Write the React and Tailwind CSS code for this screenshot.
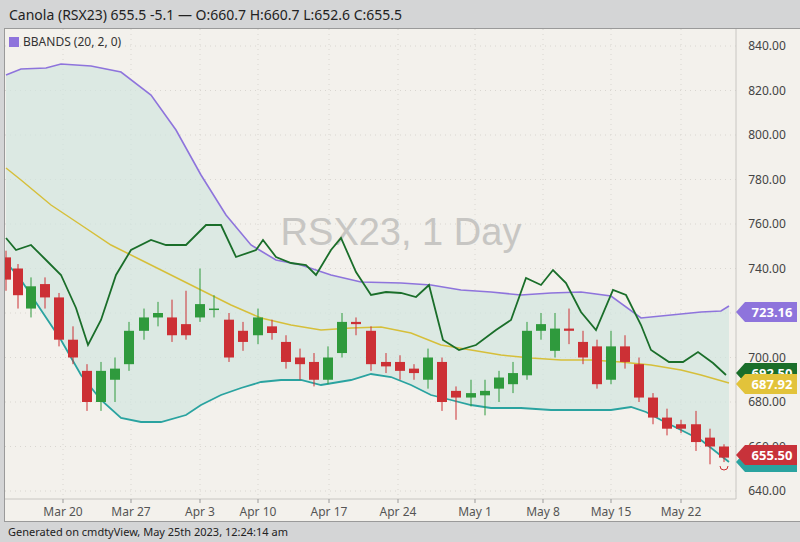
import React from 'react';

// page-coordinate data read off the reference
const upper = [[5,75],[20,69],[45,68],[60,64],[90,66],[120,72],[150,95],[175,130],[200,175],[225,215],[250,245],[275,260],[300,265],[330,275],[360,282],[400,283],[430,285],[460,290],[490,292],[520,295],[550,293],[580,292],[610,296],[640,318],[670,315],[700,312],[720,311],[728,306]];
const lower = [[5,262],[20,280],[40,310],[60,340],[80,375],[100,400],[120,418],[140,422],[160,422],[185,415],[200,405],[220,395],[240,388],[260,382],[280,380],[300,380],[320,385],[350,380],[370,374],[390,377],[410,385],[430,395],[450,400],[470,405],[490,408],[520,408],[550,410],[580,410],[610,410],[630,407],[645,412],[660,420],[680,430],[700,440],[728,462]];
const mid = [[5,168],[20,180],[50,205],[80,225],[110,245],[140,260],[170,275],[200,290],[230,305],[260,318],[290,325],[320,330],[350,328],[380,327],[410,333],[440,345],[470,350],[500,355],[530,358],[560,360],[590,360],[620,362],[650,365],[680,370],[700,375],[728,383]];
const close = [[5,238],[15,250],[30,245],[45,260],[60,275],[75,308],[87,345],[100,320],[115,275],[130,250],[150,240],[165,245],[185,245],[205,225],[220,225],[235,257],[255,250],[262,240],[275,257],[290,263],[305,265],[315,275],[330,250],[340,238],[355,272],[370,295],[385,292],[400,293],[415,297],[428,285],[442,340],[458,350],[475,345],[495,330],[510,320],[525,278],[540,285],[552,270],[565,283],[580,312],[595,330],[612,290],[625,295],[640,325],[650,350],[668,362],[682,362],[697,352],[712,363],[725,375]];

// x, open, close, high, low (price)
const candles = [
  [5,745,735,748,730],[17,740,728,742,722],[30,722,732,736,718],[44,733,727,736,722],[58,727,708,729,705],
  [72,708,700,714,697],[86,694,680,697,676],[100,680,694,698,676],[114,690,695,700,680],[128,697,712,716,694],
  [143,712,718,722,708],[157,718,720,725,714],[171,718,710,726,707],[185,715,710,730,708],[199,718,724,740,716],
  [213,722,722,728,718],[228,717,700,720,698],[242,712,707,716,703],[257,710,718,722,706],[271,714,711,717,708],
  [285,707,698,710,695],[299,700,697,704,690],[313,698,690,702,687],[327,690,700,705,688],[341,702,716,720,700],
  [355,716,715,718,710],[370,712,697,714,694],[385,698,696,702,693],[399,698,694,701,690],[413,695,693,697,690],
  [427,690,700,704,686],[441,698,680,700,676],[455,685,682,687,672],[470,682,684,690,678],[484,683,685,690,674],
  [498,686,691,694,680],[512,688,693,698,684],[526,692,712,716,690],[540,712,715,720,708],[554,703,713,720,700],
  [568,713,712,722,706],[582,707,700,712,697],[596,705,688,708,686],[610,690,705,712,688],[624,705,698,710,695],
  [638,697,682,700,680],[652,682,673,684,670],[666,673,668,677,665],[680,670,668,672,666],[695,670,662,676,658],
  [709,664,660,668,652],[723,660,655,661,653],
];
const py = v => 46 + (840 - v) * 2.225;
const pts = a => a.map(p => p.join(',')).join(' ');
const dates = [[62,'Mar 20'],[130,'Mar 27'],[199,'Apr 3'],[257,'Apr 10'],[328,'Apr 17'],[397,'Apr 24'],[474,'May 1'],[542,'May 8'],[610,'May 15'],[680,'May 22']];
const prices = [840,820,800,780,760,740,720,700,680,660,640];

function Tag({ y, color, text }) {
  return (
    <g>
      <polygon points={`735,${y} 744,${y - 10} 796,${y - 10} 796,${y + 10} 744,${y + 10}`} fill={color} />
      <text x="771" y={y + 5} textAnchor="middle" fontSize="13" fontWeight="bold" fill="#fff">{text}</text>
    </g>
  );
}

export default function App() {
  return (
    <div className="w-[800px] h-[542px] bg-[#d4d5d6] flex flex-col font-['Open_Sans','Liberation_Sans',sans-serif]">
      <div className="h-[28px] flex items-center px-[9px] text-[14px] text-[#222] font-['Liberation_Sans',Arial,sans-serif]">
        Canola (RSX23) 655.5 -5.1 — O:660.7 H:660.7 L:652.6 C:655.5
      </div>
      <div className="ml-[4px] w-[796px] h-[494px] bg-[#f3f1ec] border border-[#9a9a9a] border-r-0 relative">
        <svg width="796" height="492" viewBox="4 29 796 492" className="block">
          {prices.map(p => (
            <line key={p} x1="4" x2="735" y1={py(p)} y2={py(p)} stroke="#d9d6d0" strokeDasharray="1 4" />
          ))}
          {dates.map(([x]) => (
            <line key={x} x1={x} x2={x} y1="29" y2="499" stroke="#d9d6d0" strokeDasharray="1 4" />
          ))}
          <text x="400" y="245" textAnchor="middle" fontSize="38" fill="#c7c6c3" fontFamily='"Liberation Sans", Arial, sans-serif'>RSX23, 1 Day</text>
          <polygon points={pts([...upper, ...[...lower].reverse()])} fill="#cfe5df" fillOpacity="0.65" />
          <polyline points={pts(upper)} fill="none" stroke="#8e74dc" strokeWidth="1.6" />
          <polyline points={pts(lower)} fill="none" stroke="#2aa3a0" strokeWidth="1.8" />
          <polyline points={pts(mid)} fill="none" stroke="#d6bf3a" strokeWidth="1.5" />
          <polyline points={pts(close)} fill="none" stroke="#1a6e2a" strokeWidth="1.8" />
          {candles.map(([x, o, c, h, l]) => {
            const col = c >= o ? '#2f9a3d' : '#cc3035';
            const top = py(Math.max(o, c));
            const hgt = Math.max(1.5, Math.abs(o - c) * 2.225);
            return (
              <g key={x}>
                <line x1={x} x2={x} y1={py(h)} y2={py(l)} stroke={col} strokeWidth="1" />
                <rect x={x - 5} y={top} width="10" height={hgt} fill={col} />
              </g>
            );
          })}
          <path d="M719 466 a4 4 0 0 0 8 0" fill="none" stroke="#cc3035" strokeWidth="1" />
          <line x1="4" x2="735" y1="499" y2="499" stroke="#c8c6c2" />
          <line x1="735" x2="735" y1="29" y2="499" stroke="#c8c6c2" />
          {dates.map(([x, d]) => (
            <g key={d}>
              <line x1={x} x2={x} y1="499" y2="503" stroke="#999" />
              <text x={x} y="516" textAnchor="middle" fontSize="12" fill="#555">{d}</text>
            </g>
          ))}
          {prices.map(p => (
            <text key={p} x="766" y={py(p) + 4} textAnchor="middle" fontSize="12" fill="#444">{p.toFixed(2)}</text>
          ))}
          <Tag y={312} color="#8e74dc" text="723.16" />
          <Tag y={373} color="#1a6e2a" text="692.50" />
          <Tag y={384} color="#e2c33a" text="687.92" />
          <Tag y={462} color="#2aa3a0" text="" />
          <Tag y={455} color="#c8323a" text="655.50" />
        </svg>
        <div className="absolute left-[4px] top-[4px] flex items-center gap-[4px] text-[12px] text-[#333]">
          <span className="w-[10px] h-[10px] bg-[#8e74dc]" />
          BBANDS (20, 2, 0)
        </div>
      </div>
      <div className="h-[20px] flex items-center px-[8px] text-[11px] text-[#222] font-['Liberation_Sans',Arial,sans-serif]">
        Generated on cmdtyView, May 25th 2023, 12:24:14 am
      </div>
    </div>
  );
}
